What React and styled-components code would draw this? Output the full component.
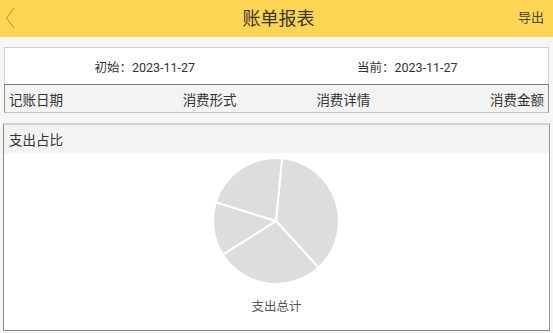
import * as React from 'react'
import styled, { createGlobalStyle } from 'styled-components'

const Global = createGlobalStyle`
  body {
    margin: 0;
    background: #f6f6f4;
    font-family: Roboto, "Noto Sans CJK SC", sans-serif;
    color: #333;
  }
`

const slices = [
  { from: 5.5, to: 137.6 },
  { from: 137.6, to: 237.8 },
  { from: 237.8, to: 287.3 },
  { from: 287.3, to: 365.5 },
]

const point = (deg, r) => {
  const a = ((deg - 90) * Math.PI) / 180
  return [63 + r * Math.cos(a), 63 + r * Math.sin(a)]
}

const slicePath = ({ from, to }) => {
  const [x1, y1] = point(from, 63)
  const [x2, y2] = point(to, 63)
  const large = to - from > 180 ? 1 : 0
  return `M63,63 L${x1},${y1} A63,63 0 ${large} 1 ${x2},${y2} Z`
}

const Header = styled.header`
  height: 37px;
  background: #fed654;
  display: flex;
  align-items: center;
  justify-content: space-between;
  padding: 0 9px 0 5px;
  box-sizing: border-box;
`

const Back = styled.svg`
  width: 10px;
  height: 22px;
  margin-top: -2px;
`

const Title = styled.h1`
  margin: -4px 0 0 24px;
  font-size: 18px;
  font-weight: normal;
  color: #3a3424;
`

const Export = styled.span`
  font-size: 13px;
  color: #4a4330;
  margin-top: -4px;
`

const Content = styled.main`
  padding: 10px 4px 0 4px;
`

const DateBox = styled.div`
  height: 37px;
  box-sizing: border-box;
  border: 1px solid #cfcfcf;
  border-bottom: none;
  background: #fff;
  display: grid;
  grid-template-columns: 1fr 1fr;
  align-items: center;
  font-size: 12.5px;
  color: #333;
`

const DateItem = styled.span`
  justify-self: center;
  margin-left: ${({ shift }) => shift}px;
`

const TableHead = styled.div`
  height: 29px;
  box-sizing: border-box;
  border: 1px solid #8f8f8f;
  border-top-color: #777;
  border-bottom-color: #c4c4c4;
  background: #f3f3f3;
  display: grid;
  grid-template-columns: repeat(4, 1fr);
  align-items: center;
  padding: 0 4px;
  font-size: 13.5px;
  color: #333;
`

const Col = styled.span`
  text-align: ${({ align }) => align};
`

const Card = styled.section`
  margin: 10px -1px 0 -1px;
  border: 1px solid #8a8a8a;
  border-top: 2px solid #d0d0d0;
  border-right-color: #999;
  background: #fff;
`

const CardTitle = styled.div`
  height: 28px;
  background: #f3f3f3;
  display: flex;
  align-items: center;
  padding: 0 5px;
  font-size: 13.5px;
  color: #333;
`

const CardBody = styled.div`
  height: 177px;
  display: flex;
  flex-direction: column;
  align-items: center;
  padding-top: 5px;
  box-sizing: border-box;
`

const Pie = styled.svg`
  width: 126px;
  height: 126px;
  margin-left: -2px;
`

const Caption = styled.div`
  margin-top: 12px;
  font-size: 12.5px;
  color: #555;
`

export default function App() {
  return (
    <>
      <Global />
      <Header>
        <Back viewBox="0 0 10 22">
          <path d="M9 1 L1.5 11 L9 21" fill="none" stroke="#a08a3c" strokeWidth="0.9" />
        </Back>
        <Title>账单报表</Title>
        <Export>导出</Export>
      </Header>
      <Content>
        <DateBox>
          <DateItem shift={8}>初始：2023-11-27</DateItem>
          <DateItem shift={-10}>当前：2023-11-27</DateItem>
        </DateBox>
        <TableHead>
          <Col align="left">记账日期</Col>
          <Col align="center">消费形式</Col>
          <Col align="center">消费详情</Col>
          <Col align="right">消费金额</Col>
        </TableHead>
        <Card>
          <CardTitle>支出占比</CardTitle>
          <CardBody>
            <Pie viewBox="0 0 126 126">
              {slices.map((s, i) => (
                <path key={i} d={slicePath(s)} fill="#dddddd" stroke="#fff" strokeWidth="2" />
              ))}
            </Pie>
            <Caption>支出总计</Caption>
          </CardBody>
        </Card>
      </Content>
    </>
  )
}
